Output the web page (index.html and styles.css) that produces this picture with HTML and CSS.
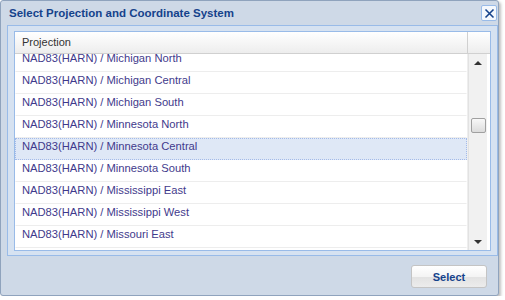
FILE: index.html
```html
<!DOCTYPE html>
<html lang="en">
<head>
    <meta charset="UTF-8">
    <title>Select Projection and Coordinate System</title>
    <link rel="stylesheet" href="styles.css">
</head>
<body>
    <div class="window">
        <div class="title">
            <span>Select Projection and Coordinate System</span>
            <span class="close">
                <svg width="11" height="11" viewBox="0 0 11 11"><path d="M1.5 1.5 L9.5 9.5 M9.5 1.5 L1.5 9.5" stroke="#15428b" stroke-width="1.6" fill="none"/></svg>
            </span>
        </div>
        <div class="frame">
            <div class="grid">
                <div class="grid-head">
                    <div class="col">Projection</div>
                    <div class="col-pad"></div>
                </div>
                <div class="grid-body">
                    <div class="rows">
                        <div class="row-list">
                            <div class="row">NAD83(HARN) / Michigan North</div>
                            <div class="row">NAD83(HARN) / Michigan Central</div>
                            <div class="row">NAD83(HARN) / Michigan South</div>
                            <div class="row">NAD83(HARN) / Minnesota North</div>
                            <div class="row selected">NAD83(HARN) / Minnesota Central</div>
                            <div class="row">NAD83(HARN) / Minnesota South</div>
                            <div class="row">NAD83(HARN) / Mississippi East</div>
                            <div class="row">NAD83(HARN) / Mississippi West</div>
                            <div class="row">NAD83(HARN) / Missouri East</div>
                        </div>
                    </div>
                    <div class="scrollbar">
                        <div class="arrow up"></div>
                        <div class="track"><div class="thumb"></div></div>
                        <div class="arrow down"></div>
                    </div>
                </div>
            </div>
        </div>
        <div class="footer">
            <button class="btn">Select</button>
        </div>
    </div>
</body>
</html>
```

FILE: styles.css
```css
body { margin: 0; background: #ffffff; font-family: "Liberation Sans", Arial, sans-serif; }
.window { width: 497px; height: 294px; border: 1px solid #8fa3bd; border-radius: 3px; background: #ced9e7; box-shadow: 2px 2px 3px rgba(0,0,0,0.25); }
.title { height: 24px; display: flex; align-items: center; justify-content: space-between; padding: 0 1px 0 8px; font: bold 11.5px "Liberation Sans", Arial, sans-serif; color: #15428b; }
.close { width: 14px; height: 14px; border: 1px solid #99bbe8; border-radius: 2px; background: #f4f8fd; display: flex; align-items: center; justify-content: center; }
.frame { margin-left: 6px; width: 477px; border: 1px solid #99bbe8; padding: 5px 6px 4px 6px; background: #d6e2f1; }
.grid { border: 1px solid #99bbe8; background: #ffffff; }
.grid-head { display: flex; height: 21px; border-bottom: 1px solid #d0d0d0; background: linear-gradient(#ffffff, #ededed); font: 11px "Liberation Sans", Arial, sans-serif; color: #333333; }
.col { flex: 1; padding-left: 7px; line-height: 21px; border-right: 1px solid #d0d0d0; }
.col-pad { width: 22px; }
.grid-body { display: flex; height: 196px; }
.rows { flex: 1; overflow: hidden; border-right: 1px solid #eeeeee; }
.row-list { margin-top: -4px; }
.row { box-sizing: border-box; height: 22px; line-height: 20px; padding: 1px 0 0 6px; border: 1px solid transparent; border-bottom-color: #ededed; font: 11.2px "Liberation Sans", Arial, sans-serif; color: #3f3a8c; }
.row.selected { background: #dfe8f6; border: 1px dotted #a3bae9; }
.scrollbar { width: 18px; background: #f1f1f1; border-left: 1px solid #e2e2e2; margin-right: 3px; display: flex; flex-direction: column; }
.arrow { height: 17px; display: flex; align-items: center; justify-content: center; }
.arrow.up::after { content: ""; border-left: 4px solid transparent; border-right: 4px solid transparent; border-bottom: 4px solid #333333; }
.arrow.down::after { content: ""; border-left: 4px solid transparent; border-right: 4px solid transparent; border-top: 4px solid #333333; }
.track { flex: 1; padding-top: 47px; display: flex; justify-content: center; }
.thumb { width: 13px; height: 13px; border: 1px solid #a0a0a0; border-radius: 2px; background: linear-gradient(#f8f8f8, #dcdcdc); }
.footer { display: flex; justify-content: flex-end; padding: 9px 11px 0 0; }
.btn { width: 76px; height: 23px; border: 1px solid #c4c4c4; border-radius: 3px; background: linear-gradient(#ffffff 0%, #f4f4f4 50%, #e2e2e2 51%, #ececec 100%); font: bold 11px "Liberation Sans", Arial, sans-serif; color: #15428b; }
```
